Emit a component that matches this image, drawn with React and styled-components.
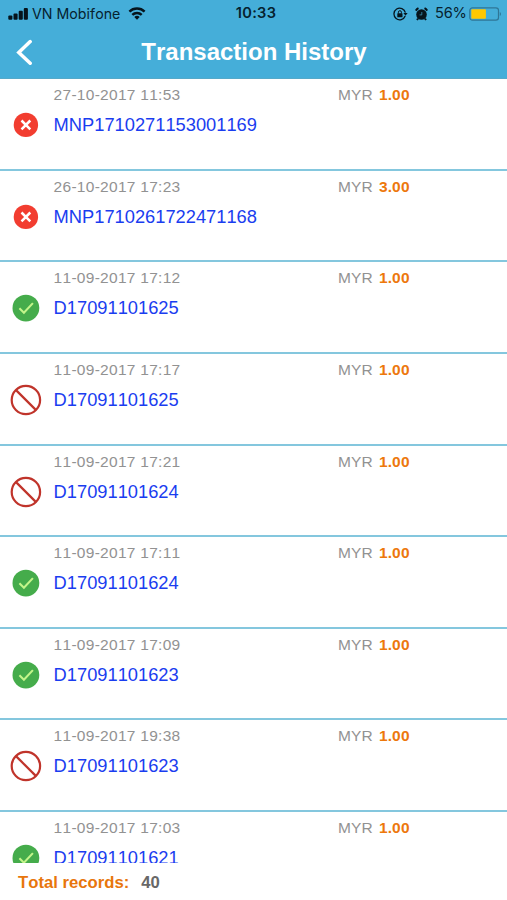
import styled, { createGlobalStyle, css } from "styled-components";

const transactions = [
  { date: "27-10-2017 11:53", code: "MNP1710271153001169", amount: "1.00", status: "failed" },
  { date: "26-10-2017 17:23", code: "MNP1710261722471168", amount: "3.00", status: "failed" },
  { date: "11-09-2017 17:12", code: "D17091101625", amount: "1.00", status: "success" },
  { date: "11-09-2017 17:17", code: "D17091101625", amount: "1.00", status: "blocked" },
  { date: "11-09-2017 17:21", code: "D17091101624", amount: "1.00", status: "blocked" },
  { date: "11-09-2017 17:11", code: "D17091101624", amount: "1.00", status: "success" },
  { date: "11-09-2017 17:09", code: "D17091101623", amount: "1.00", status: "success" },
  { date: "11-09-2017 19:38", code: "D17091101623", amount: "1.00", status: "blocked" },
  { date: "11-09-2017 17:03", code: "D17091101621", amount: "1.00", status: "success" },
];

const StatusIcon = ({ status }) => {
  if (status === "failed") {
    return (
      <svg width="32" height="32" viewBox="0 0 32 32">
        <circle cx="15.9" cy="15.9" r="12.2" fill="#f23d30" />
        <path d="M11.5 11.5l8.8 8.8M20.3 11.5l-8.8 8.8" stroke="#fff" strokeWidth="2.5" />
      </svg>
    );
  }
  if (status === "success") {
    return (
      <svg width="32" height="32" viewBox="0 0 32 32">
        <circle cx="15.9" cy="16.1" r="13.4" fill="#45ac4b" />
        <path d="M9.4 16.3l4.5 4.4 9-9.6" fill="none" stroke="#c3f58a" strokeWidth="2.1" />
      </svg>
    );
  }
  return (
    <svg width="32" height="32" viewBox="0 0 32 32" fill="none" stroke="#c0342b" strokeWidth="2.2">
      <circle cx="15.9" cy="16" r="14.2" />
      <path d="M6 6.1l19.8 19.8" />
    </svg>
  );
};

const App = () => {
  return (
    <Screen>
      <GlobalStyle />
      <Header>
        <StatusBar>
          <StatusSide>
            <svg width="21" height="12" viewBox="0 0 21 12" fill="#06141c">
              <rect x=".3" y="7.6" width="4.1" height="4.2" rx="1" />
              <rect x="5.5" y="5.6" width="4.1" height="6.2" rx="1" />
              <rect x="10.7" y="2.8" width="4.1" height="9" rx="1" />
              <rect x="15.8" y="0" width="4.1" height="11.8" rx="1" />
            </svg>
            <Carrier>VN Mobifone</Carrier>
            <svg width="18" height="13" viewBox="0 0 18 13" fill="none" stroke="#06141c" strokeWidth="2.4">
              <path d="M1.4 4.7a10.8 10.8 0 0 1 15.2 0" />
              <path d="M4.3 7.9a6.7 6.7 0 0 1 9.4 0" />
              <path d="M9 12.7L6.3 10a3.9 3.9 0 0 1 5.4 0z" fill="#06141c" stroke="none" />
            </svg>
          </StatusSide>
          <Clock>10:33</Clock>
          <StatusSide $end>
            <svg width="15" height="14" viewBox="0 0 15 14" fill="none" stroke="#06141c" strokeWidth="1.3">
              <path d="M12.2 9A5.8 5.8 0 1 1 12.4 5.6" />
              <path d="M10.4 5.9h4.2l-2.1 2.9z" fill="#06141c" stroke="none" />
              <rect x="4.3" y="6.2" width="5.2" height="4" rx=".5" fill="#06141c" stroke="none" />
              <path d="M5.4 6.5V5.2a1.5 1.5 0 0 1 3 0v1.3" strokeWidth="1" />
            </svg>
            <Alarm width="13" height="14" viewBox="0 0 13 14">
              <circle cx="6.5" cy="7.5" r="5.3" fill="#06141c" />
              <path d="M.7 3.6A8 8 0 0 1 3.5 1.2M9.5 1.2a8 8 0 0 1 2.8 2.4M3 11.6l-1 1.4M10 11.6l1 1.4" stroke="#06141c" strokeWidth="1.9" />
              <path d="M6.8 5v2.9H4.6" fill="none" stroke="#3b93b8" strokeWidth=".8" />
            </Alarm>
            <Percent>56%</Percent>
            <svg width="33" height="14" viewBox="0 0 33 14">
              <rect x=".8" y=".8" width="28.7" height="12.4" rx="2.6" fill="none" stroke="#2f7696" strokeWidth="1.2" />
              <rect x="2.3" y="2.3" width="14.6" height="9.4" rx=".8" fill="#ffc800" />
              <path d="M30.8 5a2.3 2.3 0 0 1 0 4z" fill="#2f7696" />
            </svg>
          </StatusSide>
        </StatusBar>
        <NavBar>
          <BackButton aria-label="Back">
            <svg width="18" height="27" viewBox="0 0 18 27" fill="none">
              <path d="M16.2 2.6L4.8 13.4l11.4 10.8" stroke="#fff" strokeWidth="3.5" strokeLinecap="round" />
            </svg>
          </BackButton>
          <Title>Transaction History</Title>
        </NavBar>
      </Header>
      <List>
        {transactions.map((item) => (
          <Row key={item.date}>
            <IconCell>
              <StatusIcon status={item.status} />
            </IconCell>
            <Details>
              <DateText>{item.date}</DateText>
              <Code>{item.code}</Code>
            </Details>
            <Price>
              <Currency>MYR</Currency>
              <Amount>{item.amount}</Amount>
            </Price>
          </Row>
        ))}
      </List>
      <Footer>
        <Label>Total records:</Label>
        <Total>40</Total>
      </Footer>
    </Screen>
  );
};

const GlobalStyle = createGlobalStyle`
  body {
    margin: 0;
    background: #fff;
    font-family: "Liberation Sans", Arial, sans-serif;
    font-kerning: none;
  }
  svg {
    display: block;
    flex-shrink: 0;
  }
`;

const Screen = styled.div`
  width: 507px;
  height: 900px;
  display: flex;
  flex-direction: column;
  overflow: hidden;
  background: #fff;
`;

const Header = styled.header`
  flex: 0 0 79px;
  box-sizing: border-box;
  background: #45aed9;
  border-bottom: 1px solid #55a9c9;
`;

const StatusBar = styled.div`
  height: 27px;
  display: grid;
  grid-template-columns: 1fr auto 1fr;
  align-items: center;
  padding: 0 5px 0 8px;
  font-family: Inter, "Liberation Sans", sans-serif;
  font-size: 14.2px;
  line-height: 27px;
  color: #06222f;
`;

const StatusSide = styled.div`
  display: flex;
  align-items: center;
  ${(props) =>
    props.$end &&
    css`
      justify-content: flex-end;
    `}
`;

const Carrier = styled.span`
  width: 89px;
  margin: 0 7px 0 3px;
  white-space: nowrap;
`;

const Clock = styled.span`
  font-size: 14.6px;
  font-weight: 600;
  letter-spacing: 0.3px;
  padding-left: 2px;
`;

const Alarm = styled.svg`
  margin: 0 7px;
`;

const Percent = styled.span`
  width: 30px;
  margin-right: 4px;
  font-size: 14.6px;
  letter-spacing: -0.2px;
`;

const NavBar = styled.div`
  height: 50px;
  display: grid;
  grid-template-columns: 60px 1fr 60px;
  align-items: center;
`;

const BackButton = styled.button`
  border: none;
  background: none;
  padding: 0 0 0 14px;
`;

const Title = styled.h1`
  margin: 0;
  padding: 0 0 1px 1px;
  text-align: center;
  color: #fff;
  font-size: 24px;
  line-height: 28px;
  font-weight: 700;
  white-space: nowrap;
`;

const List = styled.main`
  flex: 1;
  min-height: 0;
  overflow: hidden;
`;

const Row = styled.div`
  box-sizing: border-box;
  height: 91.65px;
  display: grid;
  grid-template-columns: 53.6px 284.4px 1fr;
  border-bottom: 2px solid #84c7de;
`;

const IconCell = styled.div`
  padding: 30px 0 0 10px;
`;

const Details = styled.div`
  display: flex;
  flex-direction: column;
  padding-top: 6px;
`;

const DateText = styled.span`
  font-size: 15.5px;
  letter-spacing: 0.28px;
  line-height: 20px;
  color: #929292;
`;

const Code = styled.span`
  margin-top: 8px;
  font-size: 18.3px;
  line-height: 24px;
  color: #1a3df0;
`;

const Price = styled.div`
  display: flex;
  gap: 6px;
  padding-top: 6px;
  font-size: 15.5px;
  letter-spacing: 0.15px;
  line-height: 20px;
`;

const Currency = styled.span`
  color: #929292;
`;

const Amount = styled.span`
  color: #ed780c;
  font-weight: 700;
`;

const Footer = styled.footer`
  flex: 0 0 37px;
  box-sizing: border-box;
  display: flex;
  gap: 12px;
  padding: 10px 18px 0;
  font-size: 16.7px;
  line-height: 20px;
  font-weight: 700;
  background: #fff;
`;

const Label = styled.span`
  color: #e8760c;
`;

const Total = styled.span`
  color: #686868;
`;

export default App;
